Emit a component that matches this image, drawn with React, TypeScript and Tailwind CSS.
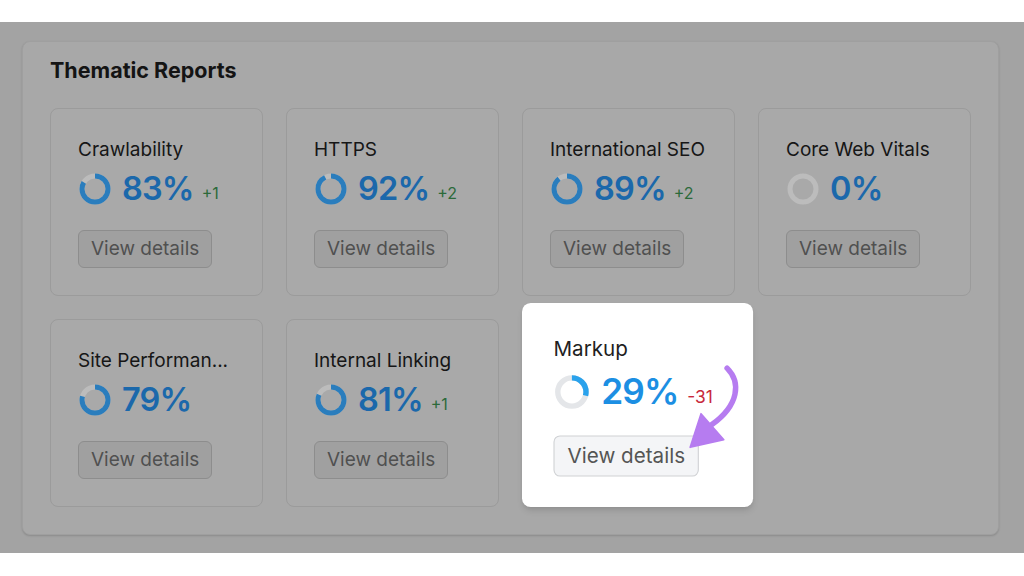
import React from "react";

type Report = {
  title: string;
  value: number;
  delta?: string;
};

const reports: Report[] = [
  { title: "Crawlability", value: 83, delta: "+1" },
  { title: "HTTPS", value: 92, delta: "+2" },
  { title: "International SEO", value: 89, delta: "+2" },
  { title: "Core Web Vitals", value: 0 },
  { title: "Site Performan...", value: 79 },
  { title: "Internal Linking", value: 81, delta: "+1" },
];

const Donut = ({ value, arc, track }: { value: number; arc: string; track: string }) => {
  const r = 13;
  const c = 2 * Math.PI * r;
  return (
    <svg width="34" height="34" viewBox="0 0 34 34" className="shrink-0">
      <circle cx="17" cy="17" r={r} fill="none" stroke={track} strokeWidth="5" />
      {value > 0 && (
        <circle
          cx="17"
          cy="17"
          r={r}
          fill="none"
          stroke={arc}
          strokeWidth="5"
          strokeDasharray={`${(c * value) / 100} ${c}`}
          transform="rotate(-90 17 17)"
        />
      )}
    </svg>
  );
};

const DimCard = ({ report }: { report: Report }) => (
  <div className="h-[188px] rounded-lg border border-[#9b9b9b] bg-[#a9a9a9] pl-[27px] pt-[29px]">
    <p className="text-[19px] leading-6 text-[#161616]">{report.title}</p>
    <div className="mt-[9px] flex h-9 items-center">
      <Donut value={report.value} arc="#2a7dbd" track="#bcbcbc" />
      <span className="ml-[10px] text-[32.5px] font-semibold tracking-tight text-[#1b68ab]">
        {report.value}%
      </span>
      {report.delta && (
        <span className="ml-2 mt-2 text-[16px] text-[#2c6a3a]">{report.delta}</span>
      )}
    </div>
    <button className="mt-[23px] h-[38px] rounded-md border border-[#8d8d8d] bg-[#a0a0a0] px-3 text-[19px] text-[#505050]">
      View details
    </button>
  </div>
);

const HighlightCard = () => (
  <div className="relative h-[188px]">
    <div className="absolute inset-0 origin-bottom-left scale-[1.085] rounded-lg bg-white pl-[29px] pt-[31px] shadow-md">
      <p className="text-[19px] leading-6 text-[#1f1f1f]">Markup</p>
      <div className="mt-[9px] flex h-9 items-center">
        <Donut value={29} arc="#2aa2ec" track="#e4e6e9" />
        <span className="ml-[10px] text-[32.5px] font-semibold tracking-tight text-[#1c8fe3]">
          29%
        </span>
        <span className="ml-2 mt-2 text-[16px] text-[#c8283b]">-31</span>
      </div>
      <button className="mt-[22px] h-[38px] rounded-md border border-[#cfd1d4] bg-[#f4f5f7] px-3 text-[19px] text-[#555555]">
        View details
      </button>
      <svg
        className="pointer-events-none absolute left-0 top-0"
        width="213"
        height="188"
        viewBox="0 0 213 188"
      >
        <path
          d="M189 60 C 202 73, 200 94, 175 112"
          fill="none"
          stroke="#b67cf0"
          strokeWidth="5"
          strokeLinecap="round"
        />
        <polygon points="165,102 186,126 155,133" fill="#b67cf0" stroke="#b67cf0" strokeWidth="1.5" strokeLinejoin="round" />
      </svg>
    </div>
  </div>
);

export default function App() {
  return (
    <div className="h-[576px] w-[1024px] bg-white pt-[22px] font-['Inter',sans-serif]">
      <div className="h-[531px] bg-[#a3a3a3] pl-[22px] pr-[25px] pt-[19px]">
        <div className="rounded-lg border border-[#9f9f9f] bg-[#a8a8a8] px-[27px] pb-[27px] pt-[14px] shadow-[0_1px_2px_rgba(0,0,0,0.15)]">
          <h2 className="text-[21.5px] font-bold leading-7 text-[#141414]">Thematic Reports</h2>
          <div className="mt-[24px] grid grid-cols-4 gap-[23px]">
            {reports.map((r) => (
              <DimCard key={r.title} report={r} />
            ))}
            <HighlightCard />
          </div>
        </div>
      </div>
    </div>
  );
}
